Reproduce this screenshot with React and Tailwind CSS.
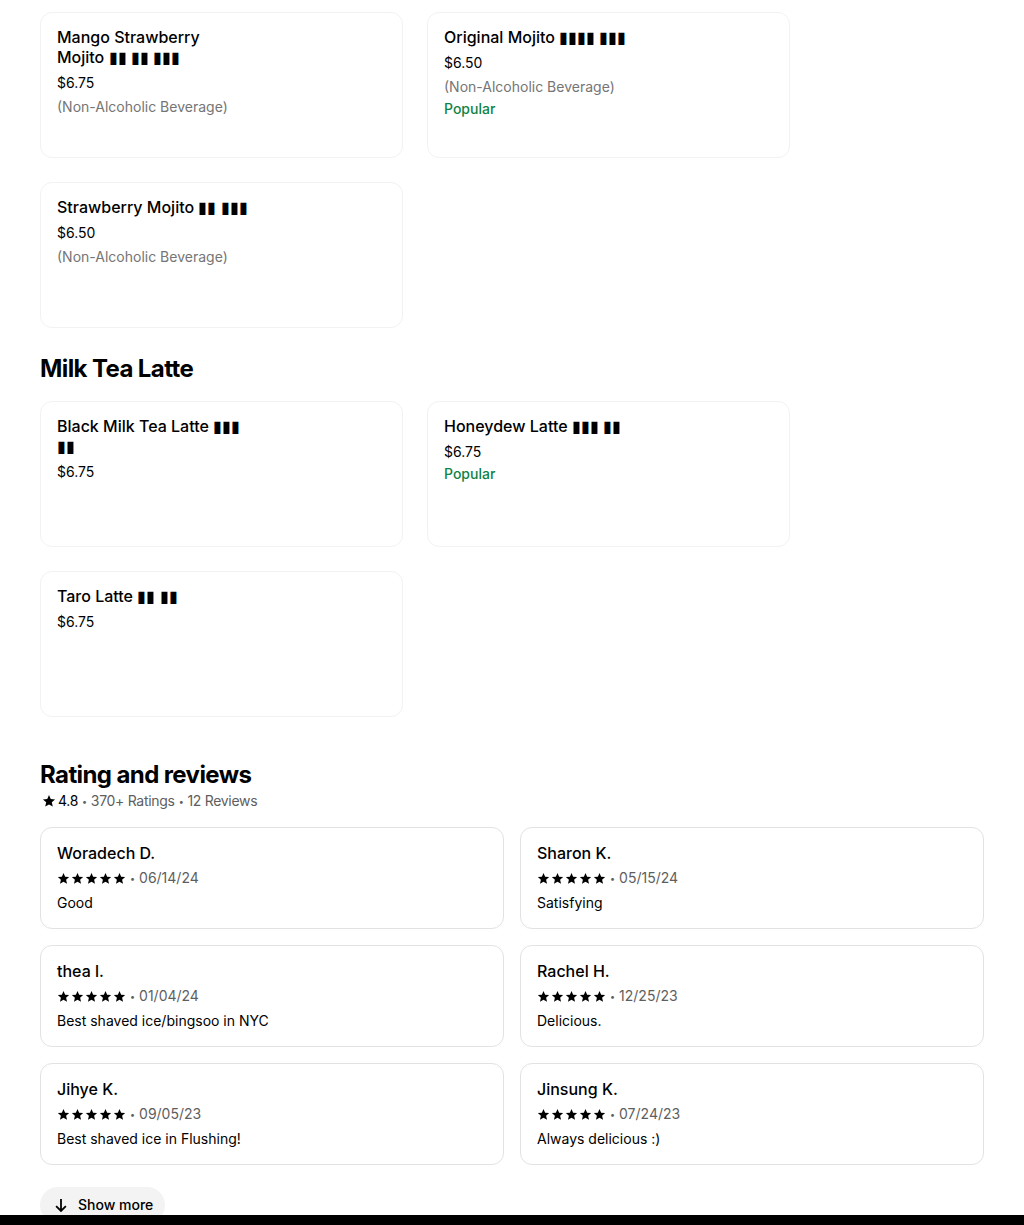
const mojitos = [
  { name: "Mango Strawberry Mojito ▮▮ ▮▮ ▮▮▮", price: "$6.75", note: "(Non-Alcoholic Beverage)" },
  { name: "Original Mojito ▮▮▮▮ ▮▮▮", price: "$6.50", note: "(Non-Alcoholic Beverage)", popular: true },
  { name: "Strawberry Mojito ▮▮ ▮▮▮", price: "$6.50", note: "(Non-Alcoholic Beverage)" },
];

const lattes = [
  { name: "Black Milk Tea Latte ▮▮▮ ▮▮", price: "$6.75" },
  { name: "Honeydew Latte ▮▮▮ ▮▮", price: "$6.75", popular: true },
  { name: "Taro Latte ▮▮ ▮▮", price: "$6.75" },
];

const reviews = [
  { name: "Woradech D.", date: "06/14/24", text: "Good" },
  { name: "Sharon K.", date: "05/15/24", text: "Satisfying" },
  { name: "thea l.", date: "01/04/24", text: "Best shaved ice/bingsoo in NYC" },
  { name: "Rachel H.", date: "12/25/23", text: "Delicious." },
  { name: "Jihye K.", date: "09/05/23", text: "Best shaved ice in Flushing!" },
  { name: "Jinsung K.", date: "07/24/23", text: "Always delicious :)" },
];

function Star({ className }) {
  return (
    <svg viewBox="0 0 24 24" className={className} fill="currentColor">
      <path d="M12 1.8l3 6.9 7.4.7-5.6 4.9 1.7 7.3L12 17.8l-6.5 3.8 1.7-7.3-5.6-4.9 7.4-.7z" />
    </svg>
  );
}

function Dot() {
  return <span className="mx-[4px] text-[9px] leading-none">•</span>;
}

function ItemCard({ item }) {
  return (
    <div className="h-[146px] rounded-xl border border-[#f2f2f2] px-4 pt-[14px]">
      <div className="max-w-[192px] text-base font-medium leading-5 text-black">{item.name}</div>
      <div className="mt-[6px] text-sm leading-5 text-black">{item.price}</div>
      {item.note && <div className="mt-1 text-sm leading-5 text-[#757575]">{item.note}</div>}
      {item.popular && <div className="mt-[2px] text-sm font-medium leading-5 text-[#0e8345]">Popular</div>}
    </div>
  );
}

function ReviewCard({ r }) {
  return (
    <div className="h-[102px] rounded-xl border border-[#e2e2e2] px-4 pt-[15px]">
      <div className="text-base font-medium leading-5 text-black">{r.name}</div>
      <div className="mt-[5px] flex h-5 items-center text-sm text-[#5e5e5e]">
        <div className="flex gap-px text-black">
          {[0, 1, 2, 3, 4].map((i) => (
            <Star key={i} className="h-[13px] w-[13px]" />
          ))}
        </div>
        <Dot />
        <span>{r.date}</span>
      </div>
      <div className="mt-[5px] text-sm leading-5 text-black">{r.text}</div>
    </div>
  );
}

export default function App() {
  return (
    <div
      className="relative h-[1225px] overflow-hidden bg-white px-10 pt-3"
      style={{ fontFamily: "Inter, 'Noto Sans', sans-serif" }}
    >
      <div className="grid w-[750px] grid-cols-2 gap-6">
        {mojitos.map((m) => (
          <ItemCard key={m.name} item={m} />
        ))}
      </div>

      <h2 className="mt-[25px] mb-4 text-2xl font-bold leading-8 tracking-tight text-black">Milk Tea Latte</h2>
      <div className="grid w-[750px] grid-cols-2 gap-6">
        {lattes.map((m) => (
          <ItemCard key={m.name} item={m} />
        ))}
      </div>

      <h2 className="mt-[42px] text-2xl font-bold leading-8 tracking-tight text-black">Rating and reviews</h2>
      <div className="flex items-center text-sm leading-5 tracking-[-0.3px] text-[#5e5e5e]">
        <Star className="ml-[2px] h-[14px] w-[14px] text-black" />
        <span className="ml-[2px] text-black">4.8</span>
        <Dot />
        <span>370+ Ratings</span>
        <Dot />
        <span>12 Reviews</span>
      </div>

      <div className="mt-4 grid grid-cols-2 gap-4">
        {reviews.map((r) => (
          <ReviewCard key={r.name} r={r} />
        ))}
      </div>

      <button className="mt-[22px] flex h-9 items-center gap-2 rounded-full bg-[#f3f3f3] pl-3 pr-3 text-sm font-medium text-black">
        <svg viewBox="0 0 24 24" className="h-[18px] w-[18px]" fill="none" stroke="currentColor" strokeWidth="2.4">
          <path d="M12 4v16M5.5 13.5L12 20l6.5-6.5" />
        </svg>
        Show more
      </button>

      <div className="absolute bottom-0 left-0 right-0 h-[10px] bg-black" />
    </div>
  );
}
